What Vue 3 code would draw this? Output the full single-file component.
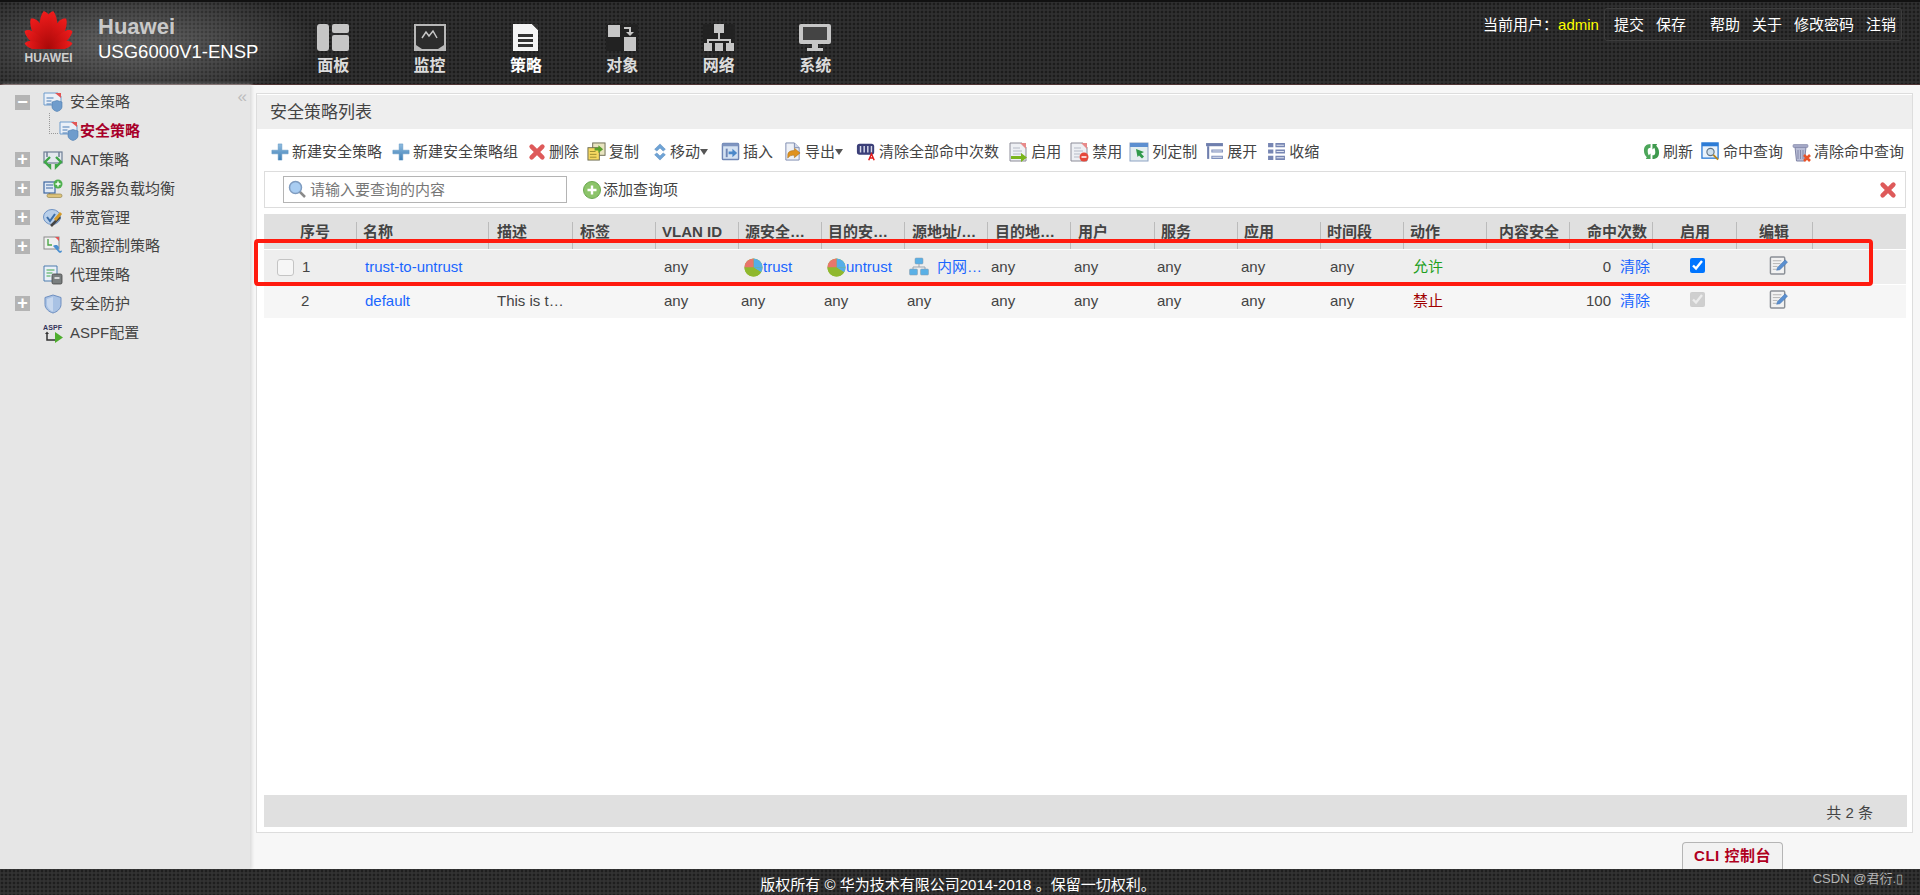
<template>
  <div class="page">
    <!-- shared icons -->
    <svg class="defs" width="0" height="0">
      <defs>
        <linearGradient id="blueG" x1="0" y1="0" x2="0" y2="1"><stop offset="0" stop-color="#8fbce0" /><stop offset="1" stop-color="#3f7fb5" /></linearGradient>
        <linearGradient id="petal" x1="0" y1="0" x2="0" y2="1"><stop offset="0" stop-color="#f01c1c" /><stop offset="1" stop-color="#a80808" /></linearGradient>
        <symbol id="i-plus" viewBox="0 0 20 20"><path d="M8 1h4v7h7v4h-7v7H8v-7H1V8h7z" fill="url(#blueG)" stroke="#5b93c2" stroke-width=".6" /></symbol>
        <symbol id="i-del" viewBox="0 0 20 20"><path d="M4 4l12 12M16 4L4 16" stroke="#de5a5a" stroke-width="5" stroke-linecap="round" fill="none" /></symbol>
        <symbol id="i-copy" viewBox="0 0 20 20"><rect x="6" y="1" width="13" height="13" fill="#e8e4c0" stroke="#6b6b50" /><rect x="1" y="6" width="12" height="13" fill="#f6d860" stroke="#6b6b50" /><path d="M3 10h6M3 13h7M3 16h7" stroke="#9a8a30" /><path d="M8 6h4V3.500L17 7.500l-5 4V9H8z" fill="#5aa02c" /></symbol>
        <symbol id="i-move" viewBox="0 0 20 20"><path d="M10 1l6 6-2.500 2L10 5.500 6.500 9 4 7zM10 19l6-6-2.500-2L10 14.500 6.500 11 4 13z" fill="#6ea3d6" stroke="#4b7fb3" stroke-width=".5" /></symbol>
        <symbol id="i-insert" viewBox="0 0 20 20"><rect x="1.500" y="1.500" width="17" height="17" rx="1" fill="#d5e2f2" stroke="#6f86b5" stroke-width="1.500" /><rect x="1.500" y="1.500" width="17" height="3" fill="#7f95c0" /><path d="M6 7v9" stroke="#6f86b5" stroke-width="2" /><path d="M8 10h4V7l5 4.500-5 4.500v-3H8z" fill="#4b88c9" /></symbol>
        <symbol id="i-export" viewBox="0 0 20 20"><path d="M3 1h9l5 5v13H3z" fill="#eef1f7" stroke="#7d8bb0" /><path d="M12 1v5h5" fill="#cfd7e8" stroke="#7d8bb0" /><path d="M5 14c0-4 3-5 7-5V6.500l6 5-6 5V14c-3 0-5 0-7 3z" fill="#e0921e" stroke="#9c6410" stroke-width=".5" /></symbol>
        <symbol id="i-clear" viewBox="0 0 22 20"><rect x="1" y="1" width="19" height="12" rx="3" fill="#3b3f78" /><path d="M5 3.500v7M9 3.500v7M13 3.500v7M17 3.500v7" stroke="#d6d8e8" stroke-width="1.600" /><path d="M14 19l3-7 3 7M15.500 16.500h3" stroke="#e21818" stroke-width="1.600" fill="none" /></symbol>
        <symbol id="i-on" viewBox="0 0 20 20"><path d="M2 1h12l4 4v14H2z" fill="#eef0f4" stroke="#8c8c98" /><path d="M12 1l6 6V1z" fill="#e88a8a" /><path d="M5 6h7M5 9h9M5 12h9" stroke="#b5bac6" /><path d="M3 14h10v-3l6 4.500-6 4.500v-3H3z" fill="#7ab51d" /></symbol>
        <symbol id="i-off" viewBox="0 0 20 20"><path d="M2 1h12l4 4v14H2z" fill="#eef0f4" stroke="#8c8c98" /><path d="M12 1l6 6V1z" fill="#e88a8a" /><path d="M5 6h7M5 9h9M5 12h6M5 15h5" stroke="#b5bac6" /><circle cx="15" cy="15" r="4.500" fill="#e5483a" /><path d="M12.500 15h5" stroke="#fff" stroke-width="1.500" /></symbol>
        <symbol id="i-cols" viewBox="0 0 20 20"><rect x="1" y="1" width="18" height="18" fill="#e4eef0" stroke="#8ea3c4" /><rect x="1" y="1" width="18" height="4" fill="#5d8fd0" /><path d="M7 7l8 3-3 1.500 3 3-2 2-3-3L8.500 15z" fill="#2f9a4a" /></symbol>
        <symbol id="i-expand" viewBox="0 0 18 18"><path d="M1 1h16v3H1z" fill="#6f7fae" /><path d="M3 4v12" stroke="#6f7fae" stroke-width="2" /><path d="M6 7h11v3H6zM6 13h11v3H6z" fill="#8091bc" /><path d="M7 8.500h9M7 14.500h9" stroke="#dfe4f0" /></symbol>
        <symbol id="i-fold" viewBox="0 0 18 18"><path d="M1 1h5v4H1zM8 1h9v4H8zM1 7h5v4H1zM8 7h9v4H8zM1 13h5v4H1zM8 13h9v4H8z" fill="#7786b3" /><path d="M9 3h7M9 9h7M9 15h7" stroke="#dfe4f0" /></symbol>
        <symbol id="i-refresh" viewBox="0 0 18 18"><path d="M8 1C3 1 1 4 1 8c0 3 1 5 3 7l-1 2h5v-6l-2 2C5 11 5 9 5 8c0-2 1-3 3-3z" fill="#4ca65a" /><path d="M10 17c5 0 7-3 7-7 0-3-1-5-3-7l1-2h-5v6l2-2c1 2 1 4 1 5 0 2-1 3-3 3z" fill="#3f9a4e" /></symbol>
        <symbol id="i-hit" viewBox="0 0 20 20"><rect x="1" y="1" width="17" height="16" fill="#e9f2fb" stroke="#2d7cd6" stroke-width="1.400" /><rect x="1" y="1" width="17" height="3.500" fill="#2d7cd6" /><circle cx="10" cy="10.500" r="3.800" fill="#cfe0ee" stroke="#5f7386" stroke-width="1.200" /><path d="M13 13.500l5 5" stroke="#b8861c" stroke-width="2" /></symbol>
        <symbol id="i-trash" viewBox="0 0 20 20"><path d="M4 5h11l-1.500 14h-8z" fill="#b9bdd6" stroke="#7f84a6" /><rect x="2" y="2.500" width="15" height="3" rx="1" fill="#a4a8c6" stroke="#7f84a6" stroke-width=".6" /><path d="M7 8v9M9.500 8v9M12 8v9" stroke="#858aaa" /><path d="M13 13l6 6M19 13l-6 6" stroke="#ea5328" stroke-width="2.600" /></symbol>
        <symbol id="i-pie" viewBox="0 0 20 20"><circle cx="10" cy="10" r="9.500" fill="#8fb82e" /><path d="M10 10V.5A9.500 9.500 0 0 1 19.500 10z" fill="#54aee8" /><path d="M10 10L19.500 10A9.500 9.500 0 0 1 18 15z" fill="#54aee8" /><path d="M10 10V.5A9.500 9.500 0 0 0 .5 10z" fill="#e8756b" /><path d="M.5 10H10l8 5c-2 3-5 4.500-8 4.500-5 0-9.500-4-9.500-9.500z" fill="#8fb82e" /></symbol>
        <symbol id="i-net" viewBox="0 0 20 20"><rect x="6" y="1" width="8" height="6" rx="1" fill="#5ab0e6" stroke="#8a9aa8" stroke-width=".5" /><path d="M10 7v3M4 13v-3h12v3" stroke="#9aa5b0" fill="none" /><rect x="0.500" y="12" width="8" height="6" rx="1" fill="#5ab0e6" stroke="#8a9aa8" stroke-width=".5" /><rect x="11.500" y="12" width="8" height="6" rx="1" fill="#5ab0e6" stroke="#8a9aa8" stroke-width=".5" /></symbol>
        <symbol id="i-edit" viewBox="0 0 20 20"><rect x="1.500" y="1" width="15" height="18" rx="1" fill="#f2f2f2" stroke="#8a8f96" stroke-width="1.500" /><path d="M4 5h9M4 8h8M4 11h5M4 14h4" stroke="#b2b2b2" /><path d="M8 15l1-3 8-8 2.500 2.500-8 8z" fill="#5a8fd0" stroke="#3f6ea8" stroke-width=".5" /></symbol>
        <symbol id="i-policy" viewBox="0 0 20 20"><path d="M1 1h14l3 3v9H1z" fill="#eaf0f8" stroke="#6f9ccc" /><path d="M12 1l6 5V1z" fill="#e25555" /><path d="M3.500 6h7M3.500 9h5M3.500 12h5" stroke="#4a7db5" /><path d="M9 10l5-1.500 5 1.500v5c0 2-2.500 4-5 4.500-2.500-.5-5-2.500-5-4.500z" fill="#6f9ccc" stroke="#4d7cae" stroke-width=".6" /></symbol>
        <symbol id="i-nat" viewBox="0 0 20 20"><rect x="1" y="2" width="18" height="11" fill="#e4e8ee" stroke="#6f7f96" stroke-width="1.200" /><path d="M4 2v5M16 2v5" stroke="#6f7f96" stroke-width="1.500" /><path d="M7 7l-5 5 5 5v-3M13 7l5 5-5 5v-3" fill="none" stroke="#3fa648" stroke-width="2.400" /></symbol>
        <symbol id="i-server" viewBox="0 0 20 20"><rect x="1" y="3" width="11" height="11" fill="#dfe9f5" stroke="#3c66a0" stroke-width="1.200" /><path d="M3 6h7M3 9h7" stroke="#3c66a0" /><path d="M6.500 14v3" stroke="#777" stroke-width="1.500" /><rect x="4" y="15" width="15" height="3.500" rx="1.700" fill="#dcc27a" stroke="#8a7a40" stroke-width=".6" /><circle cx="15" cy="5" r="4.500" fill="#4fb04f" /><path d="M15 2.500v5M12.500 5h5" stroke="#fff" stroke-width="1.400" /></symbol>
        <symbol id="i-band" viewBox="0 0 20 20"><ellipse cx="9" cy="9" rx="8.500" ry="7.500" fill="#b8cfea" stroke="#6f93c4" /><path d="M4 9l3 4 5-7" fill="none" stroke="#3c6ea8" stroke-width="2" /><path d="M8 18l9-9" stroke="#444" stroke-width="2.600" /><path d="M12 12l6-7" stroke="#d39a2a" stroke-width="3" /></symbol>
        <symbol id="i-quota" viewBox="0 0 20 20"><rect x="1" y="1" width="15" height="12" fill="#f0f0f0" stroke="#8a8a8a" /><path d="M12 1l4 4V1z" fill="#e25555" /><path d="M5 3v6h4" fill="none" stroke="#4ca648" stroke-width="1.400" /><path d="M10 10l6 6.500a2 2 0 0 0 3-2l-2 .5-1.500-1.500L16 11l-2-2c-2 0-4 .5-4 1z" fill="#4a8fd0" /></symbol>
        <symbol id="i-proxy" viewBox="0 0 20 20"><path d="M1 1h13v15H1z" fill="#eaf0f8" stroke="#4d7cae" /><path d="M3.500 5h8M3.500 8h6M3.500 11h4" stroke="#3fa648" /><rect x="9" y="9" width="10" height="10" rx="1.500" fill="#7a7f7f" stroke="#444" stroke-width=".8" /><path d="M11.500 13h5" stroke="#fff" stroke-width="1.400" /></symbol>
        <symbol id="i-shield" viewBox="0 0 20 20"><path d="M10 1l8 2.500v7c0 4-4 7.500-8 8.500-4-1-8-4.500-8-8.500v-7z" fill="#a9c2e4" stroke="#6e8fc0" /><path d="M10 3v14.500c-3-1-6-4-6-7V5z" fill="#c8d8ee" /></symbol>
        <symbol id="i-aspf" viewBox="0 0 20 20"><text x="0" y="6.500" font-size="7" font-weight="bold" font-family="Liberation Sans, sans-serif" fill="#33335a" textLength="19">ASPF</text><path d="M4 10v7h9" fill="none" stroke="#333" stroke-width="1.500" /><path d="M2 11L4 8.500 6 11z" fill="#333" /><path d="M12 9l8 5.500-8 5.500z" fill="#4fae2e" /></symbol>
      </defs>
    </svg>

    <header class="topbar">
      <div class="brand">
        <div class="logo">
          <svg width="49" height="38" viewBox="0 0 49 38">
            <path
              v-for="p in petals"
              :key="p"
              d="M0 0C-7 -8 -10 -22 -8 -32C-7 -36 -4 -38 -3 -38C2 -34 5 -24 4 -16C3.500 -10 2 -4 0 0Z"
              fill="url(#petal)"
              :transform="p"
            />
          </svg>
          <div class="logo-txt">HUAWEI</div>
        </div>
        <div class="brand-txt">
          <div class="vendor">Huawei</div>
          <div class="model">USG6000V1-ENSP</div>
        </div>
      </div>

      <nav class="nav">
        <a class="nav-item">
          <svg width="32" height="27" viewBox="0 0 32 27"><rect x="0" y="0" width="12" height="27" rx="3" fill="#c6c6c6" /><rect x="15" y="0" width="17" height="9" rx="2" fill="#c6c6c6" /><rect x="15" y="11" width="17" height="16" rx="2" fill="#c6c6c6" /></svg>
          <span>面板</span>
        </a>
        <a class="nav-item">
          <svg width="32" height="27" viewBox="0 0 32 27"><path d="M0 0h32v27H0z" fill="#b8b8b8" /><path d="M2 2h28v19l-6 4H8l-6-4z" fill="#2c2c2c" /><path d="M8 14l4-6 3 4 4-5 4 7" fill="none" stroke="#c8c8c8" stroke-width="1.500" /></svg>
          <span>监控</span>
        </a>
        <a class="nav-item active">
          <svg width="27" height="27" viewBox="0 0 27 27"><path d="M1 0h19l6 6v21H1z" fill="#f4f4f4" /><path d="M20 0h6v6z" fill="#333" /><path d="M6 10h15v3H6zM6 15h15v3H6zM6 20h15v3H6z" fill="#333" /></svg>
          <span>策略</span>
        </a>
        <a class="nav-item">
          <svg width="32" height="27" viewBox="0 0 32 27"><rect width="32" height="27" fill="#222" /><rect x="2" y="1" width="12" height="12" fill="#c6c6c6" /><rect x="18" y="13" width="12" height="14" fill="#c6c6c6" /><path d="M18 3h7v5h3l-4 4-4-4h3V5h-5z" fill="#c6c6c6" /></svg>
          <span>对象</span>
        </a>
        <a class="nav-item">
          <svg width="32" height="27" viewBox="0 0 32 27"><rect width="32" height="27" fill="#222" /><rect x="11" y="0" width="10" height="9" fill="#c6c6c6" /><path d="M16 9v7M5 20v-4h22v4" fill="none" stroke="#c6c6c6" stroke-width="2" /><rect x="1" y="19" width="8" height="8" fill="#c6c6c6" /><rect x="12" y="19" width="8" height="8" fill="#c6c6c6" /><rect x="23" y="19" width="8" height="8" fill="#c6c6c6" /></svg>
          <span>网络</span>
        </a>
        <a class="nav-item">
          <svg width="32" height="27" viewBox="0 0 32 27"><rect width="32" height="20" rx="2" fill="#c6c6c6" /><rect x="4" y="3" width="24" height="13" fill="#444" /><rect x="13" y="20" width="6" height="4" fill="#c6c6c6" /><rect x="8" y="24" width="16" height="3" fill="#c6c6c6" /></svg>
          <span>系统</span>
        </a>
      </nav>

      <div class="user-area">
        <span class="user">当前用户：<b>admin</b></span>
        <div class="user-btns">
          <a>提交</a><a>保存</a><i></i><a>帮助</a><a>关于</a><a>修改密码</a><a>注销</a>
        </div>
      </div>
    </header>

    <div class="main">
      <aside class="side">
        <span class="fold">«</span>
        <div v-for="n in tree" :key="n.label + n.icon + n.sub" class="node" :class="{ sub: n.sub, cur: n.cur }">
          <span class="exp" :class="n.exp">
            <template v-if="n.exp === 'open'">−</template>
            <template v-else-if="n.exp === 'closed'">+</template>
          </span>
          <svg class="node-ic"><use :href="'#' + n.icon" /></svg>
          <span class="node-txt">{{ n.label }}</span>
        </div>
      </aside>

      <div class="content">
        <section class="panel">
          <div class="panel-title">安全策略列表</div>

          <div class="toolbar">
            <a v-for="t in tools" :key="t.label" class="tool" :style="{ marginLeft: t.ml + 'px' }">
              <span class="tool-ic" :style="{ width: t.w + 'px' }"><svg :width="t.s || t.w - 3" :height="t.s || t.w - 3"><use :href="'#' + t.icon" /></svg></span>
              {{ t.label }}<em v-if="t.caret" class="caret"></em>
            </a>
            <div class="tool-right">
              <a v-for="t in rightTools" :key="t.label" class="tool">
                <span class="tool-ic" :style="{ width: t.w + 'px' }"><svg :width="t.w - 3" :height="t.w - 3"><use :href="'#' + t.icon" /></svg></span>
                {{ t.label }}
              </a>
            </div>
          </div>

          <div class="search">
            <div class="search-box">
              <svg class="glass" width="18" height="18" viewBox="0 0 18 18"><path d="M11 11l6 6" stroke="#8a8a8a" stroke-width="2.500" /><circle cx="7.500" cy="7.500" r="6" fill="#a9cdf2" stroke="#7f9cc0" stroke-width="1.500" /></svg>
              <input type="text" placeholder="请输入要查询的内容" />
            </div>
            <a class="add-q">
              <svg width="18" height="18" viewBox="0 0 18 18"><circle cx="9" cy="9" r="8.500" fill="#8cc46a" stroke="#6aa84f" /><path d="M9 4.500v9M4.500 9h9" stroke="#fff" stroke-width="2.400" /></svg>
              添加查询项
            </a>
            <svg class="search-x" width="18" height="18"><use href="#i-del" /></svg>
          </div>

          <div class="table">
            <div class="thead">
              <div v-for="h in heads" :key="h.t" class="th" :style="{ paddingLeft: h.p + 'px' }">{{ h.t }}</div>
            </div>

            <div class="tr tr1">
              <div class="td first"><span class="chk"></span>1</div>
              <div class="td p9"><a>trust-to-untrust</a></div>
              <div class="td"></div>
              <div class="td"></div>
              <div class="td p9">any</div>
              <div class="td p6"><svg class="pie"><use href="#i-pie" /></svg><a>trust</a></div>
              <div class="td p6"><svg class="pie"><use href="#i-pie" /></svg><a>untrust</a></div>
              <div class="td p5"><svg class="net"><use href="#i-net" /></svg><a>内网…</a></div>
              <div class="td p4">any</div>
              <div class="td p4">any</div>
              <div class="td p3">any</div>
              <div class="td p4">any</div>
              <div class="td p10">any</div>
              <div class="td p10 green">允许</div>
              <div class="td"></div>
              <div class="td"><span class="count">0</span><a class="clr">清除</a></div>
              <div class="td pchk"><input type="checkbox" checked /></div>
              <div class="td pedit"><svg class="edit"><use href="#i-edit" /></svg></div>
              <div class="td"></div>
            </div>

            <div class="tr tr2">
              <div class="td first second">2</div>
              <div class="td p9"><a>default</a></div>
              <div class="td p9">This is t…</div>
              <div class="td"></div>
              <div class="td p9">any</div>
              <div class="td p3">any</div>
              <div class="td p3">any</div>
              <div class="td p3">any</div>
              <div class="td p4">any</div>
              <div class="td p4">any</div>
              <div class="td p3">any</div>
              <div class="td p4">any</div>
              <div class="td p10">any</div>
              <div class="td p10 red">禁止</div>
              <div class="td"></div>
              <div class="td"><span class="count">100</span><a class="clr">清除</a></div>
              <div class="td pchk"><input type="checkbox" checked disabled /></div>
              <div class="td pedit"><svg class="edit"><use href="#i-edit" /></svg></div>
              <div class="td"></div>
            </div>

            <div class="mark"></div>
          </div>

          <div class="pager">共 2 条</div>
        </section>

        <div class="cli-row"><a class="cli">CLI 控制台</a></div>
      </div>
    </div>

    <footer class="foot">
      <span class="copy">版权所有 © 华为技术有限公司2014-2018 。保留一切权利。</span>
      <span class="wm">CSDN @君衍.▯</span>
    </footer>
  </div>
</template>

<script setup>
const petals = [12, -12, 35, -35, 58, -58, 82, -82].map((a, i) => {
  const s = [1, 1, 0.92, 0.92, 0.78, 0.78, 0.64, 0.64][i]
  const flip = a < 0 ? -1 : 1
  return `translate(24.5 38) rotate(${a}) scale(${s * flip} ${s})`
})

const tree = [
  { label: '安全策略', icon: 'i-policy', exp: 'open' },
  { label: '安全策略', icon: 'i-policy', sub: true, cur: true },
  { label: 'NAT策略', icon: 'i-nat', exp: 'closed' },
  { label: '服务器负载均衡', icon: 'i-server', exp: 'closed' },
  { label: '带宽管理', icon: 'i-band', exp: 'closed' },
  { label: '配额控制策略', icon: 'i-quota', exp: 'closed' },
  { label: '代理策略', icon: 'i-proxy' },
  { label: '安全防护', icon: 'i-shield', exp: 'closed' },
  { label: 'ASPF配置', icon: 'i-aspf' },
]

const tools = [
  { label: '新建安全策略', icon: 'i-plus', ml: 14, w: 21 },
  { label: '新建安全策略组', icon: 'i-plus', ml: 10, w: 21 },
  { label: '删除', icon: 'i-del', ml: 10, w: 21 },
  { label: '复制', icon: 'i-copy', ml: 8, w: 22 },
  { label: '移动', icon: 'i-move', ml: 12, w: 19, s: 18, caret: true },
  { label: '插入', icon: 'i-insert', ml: 13, w: 22 },
  { label: '导出', icon: 'i-export', ml: 10, w: 22, caret: true },
  { label: '清除全部命中次数', icon: 'i-clear', ml: 13, w: 23 },
  { label: '启用', icon: 'i-on', ml: 9, w: 23 },
  { label: '禁用', icon: 'i-off', ml: 8, w: 23 },
  { label: '列定制', icon: 'i-cols', ml: 7, w: 23 },
  { label: '展开', icon: 'i-expand', ml: 8, w: 22 },
  { label: '收缩', icon: 'i-fold', ml: 10, w: 22 },
]

const rightTools = [
  { label: '刷新', icon: 'i-refresh', w: 20 },
  { label: '命中查询', icon: 'i-hit', w: 22 },
  { label: '清除命中查询', icon: 'i-trash', w: 23 },
]

const heads = [
  { t: '序号', p: 36 }, { t: '名称', p: 6 }, { t: '描述', p: 8 }, { t: '标签', p: 7 },
  { t: 'VLAN ID', p: 6 }, { t: '源安全…', p: 6 }, { t: '目的安…', p: 6 }, { t: '源地址/…', p: 7 },
  { t: '目的地…', p: 7 }, { t: '用户', p: 7 }, { t: '服务', p: 6 }, { t: '应用', p: 6 },
  { t: '时间段', p: 6 }, { t: '动作', p: 6 }, { t: '内容安全', p: 12 }, { t: '命中次数', p: 17 },
  { t: '启用', p: 27 }, { t: '编辑', p: 22 }, { t: '', p: 0 },
]
</script>

<style>
html, body { margin: 0; overflow: hidden; }
</style>

<style scoped>
.page {
  width: 1920px;
  height: 895px;
  display: flex;
  flex-direction: column;
  background: #f7f7f7;
  color: #444;
  font: 15px/20px "Liberation Sans", "Noto Sans CJK SC", sans-serif;
}
.defs { position: absolute; }

.topbar {
  height: 85px;
  flex: none;
  display: flex;
  box-sizing: border-box;
  border-top: 2px solid #111;
  border-bottom: 1px solid #4e3434;
  background:
    radial-gradient(ellipse 190px 60px at 130px 42px, rgba(255, 255, 255, .26), transparent),
    radial-gradient(circle, #1c1c1c 1.2px, transparent 1.7px) 0 0 / 4px 4px,
    #303031;
}
.brand { width: 285px; flex: none; display: flex; padding: 9px 0 0 24px; box-sizing: border-box; }
.logo { width: 49px; }
.logo svg { display: block; }
.logo-txt { font-size: 12px; line-height: 13px; margin-top: 3px; font-weight: bold; color: #cfcfcf; text-align: center; }
.brand-txt { margin-left: 25px; }
.vendor { font-size: 22px; line-height: 24px; margin-top: 4px; font-weight: bold; color: #c9c9c9; }
.model { font-size: 18.500px; line-height: 23px; margin-top: 1px; color: #fff; }

.nav { display: flex; padding-top: 22px; }
.nav-item {
  width: 96.400px;
  height: 62px;
  display: flex;
  flex-direction: column;
  align-items: center;
  color: #dcdcdc;
  font-size: 16px;
  font-weight: bold;
}
.nav-item span { line-height: 20px; margin-top: 5px; }
.nav-item.active span { color: #fff; }

.user-area { margin-left: auto; display: flex; padding: 6px 18px 0 0; color: #fff; height: 33px; }
.user { line-height: 33px; margin-right: 5px; }
.user b { color: #ff0; font-weight: normal; }
.user-btns {
  display: flex;
  gap: 12px;
  padding: 0 5px 0 9px;
  line-height: 31px;
  border: 1px solid #3c3c3c;
  border-radius: 3px;
}
.user-btns i { width: 0; }

.main { flex: 1; display: flex; min-height: 0; }

.side {
  position: relative;
  width: 250px;
  flex: none;
  box-sizing: border-box;
  padding-top: 3px;
  background: #e6e6e6;
  box-shadow: 2px 0 3px #dcdcdc;
}
.fold { position: absolute; top: 5px; right: 3px; font-size: 17px; line-height: 14px; color: #bcbcbc; }
.node { position: relative; height: 28.800px; display: flex; align-items: center; padding-left: 15px; color: #444; }
.exp {
  width: 15px;
  height: 15px;
  flex: none;
  margin-right: 13px;
  text-align: center;
  line-height: 14px;
  font-size: 18px;
  font-weight: bold;
  color: #fff;
}
.exp.open, .exp.closed { background: #b4b4b4; }
.node-ic { width: 20px; height: 20px; flex: none; margin-right: 7px; }
.node.sub { padding-left: 59px; }
.node.sub .exp { display: none; }
.node.sub .node-ic { margin-right: 1px; }
.node.sub::before {
  content: "";
  position: absolute;
  left: 49px;
  top: -4px;
  width: 8px;
  height: 20px;
  border-left: 1px dotted #999;
  border-bottom: 1px dotted #999;
}
.node.cur .node-txt { color: #a8002a; font-weight: bold; }

.content { flex: 1; display: flex; flex-direction: column; margin: 8px 7px 0 6px; min-width: 0; }
.panel {
  flex: 1;
  display: flex;
  flex-direction: column;
  box-sizing: border-box;
  padding-top: 1px;
  background: #fff;
  border: 1px solid #ddd;
}
.panel-title {
  height: 34px;
  padding-left: 13px;
  line-height: 36px;
  font-size: 17px;
  background: #eee;
  color: #444;
}
.toolbar { height: 42px; box-sizing: border-box; padding-top: 3px; display: flex; align-items: center; }
.tool { display: flex; align-items: center; white-space: nowrap; }
.tool-ic { display: flex; align-items: center; flex: none; height: 18px; }
.tool-ic svg { display: block; flex: none; }
.caret {
  width: 0;
  height: 0;
  margin: 1px 0 0 0;
  border: 4px solid transparent;
  border-top: 6px solid #555;
  border-bottom: 0;
}
.tool-right { margin-left: auto; display: flex; gap: 8px; padding-right: 8px; }

.search {
  height: 37px;
  margin: 0 6px 0 7px;
  display: flex;
  align-items: center;
  box-sizing: border-box;
  border: 1px solid #ddd;
  padding-left: 18px;
}
.search-box { position: relative; width: 284px; height: 27px; }
.search-box input {
  width: 100%;
  height: 100%;
  box-sizing: border-box;
  border: 1px solid #b4b4b4;
  padding: 0 0 0 26px;
  font: inherit;
  outline: none;
  background: #fff;
}
.search-box input::placeholder { color: #777; }
.glass { position: absolute; left: 5px; top: 4px; }
.add-q { display: flex; align-items: center; gap: 2px; margin-left: 16px; color: #444; }
.search-x { margin-left: auto; margin-right: 8px; }

.table { position: relative; margin: 6px 6px 0 7px; flex: 1; }
.thead, .tr {
  display: grid;
  grid-template-columns: 92px 132px 84px 83px 83px 83px 83px 83px 83px 84px 83px 83px 83px 83px 83px 83px 84px 76px 1fr;
}
.thead { height: 35px; background: #e0e0e0; }
.th {
  margin-top: 8px;
  box-sizing: border-box;
  border-left: 1px solid #bbb;
  font-weight: bold;
  color: #444;
  white-space: nowrap;
  overflow: hidden;
}
.th:first-child { border-left: 0; }
.tr { height: 33px; margin-top: 1px; background: #f6f6f6; }
.tr1 { height: 34px; background: #eee; }
.tr2 { box-sizing: border-box; padding-bottom: 2px; }
.td { display: flex; align-items: center; min-width: 0; white-space: nowrap; }
.td a { color: #1a66ff; }
.first { padding-left: 13px; }
.second { padding-left: 37px; }
.chk {
  width: 15px;
  height: 15px;
  margin-right: 8px;
  background: #f6f6f6;
  border: 1px solid #c4c4c4;
  border-radius: 3px;
}
.p3 { padding-left: 3px; }
.p4 { padding-left: 4px; }
.p5 { padding-left: 5px; }
.p6 { padding-left: 6px; }
.p9 { padding-left: 9px; }
.p10 { padding-left: 10px; }
.pie { width: 19px; height: 19px; flex: none; }
.net { width: 20px; height: 20px; flex: none; margin-right: 8px; }
.green { color: #1ea01e; }
.red { color: #a00000; }
.count { width: 42px; text-align: right; }
.clr { margin-left: 9px; }
.pchk { padding-left: 38px; }
.pchk input { width: 15px; height: 15px; margin: 0 0 3px; }
.pedit { padding-left: 33px; }
.edit { width: 19px; height: 19px; margin-bottom: 3px; }

.mark {
  position: absolute;
  left: -10px;
  top: 25px;
  width: 1619px;
  height: 47px;
  box-sizing: border-box;
  border: 4px solid #ff1a0e;
  border-radius: 4px;
  pointer-events: none;
}

.pager {
  height: 32px;
  margin: 0 5px 5px 7px;
  padding-right: 34px;
  box-sizing: border-box;
  background: #e0e0e0;
  text-align: right;
  line-height: 36px;
}

.cli-row { height: 36px; flex: none; display: flex; justify-content: flex-end; align-items: flex-end; padding-right: 130px; }
.cli {
  width: 101px;
  height: 27px;
  box-sizing: border-box;
  text-align: center;
  line-height: 25px;
  font-weight: bold;
  letter-spacing: .5px;
  color: #b0001e;
  background: #f2f2f2;
  border: 1px solid #b5b5b5;
  border-bottom: 0;
  border-radius: 4px 4px 0 0;
}

.foot {
  position: relative;
  height: 26px;
  flex: none;
  text-align: center;
  color: #fff;
  background:
    radial-gradient(circle, #1e1e1e 1.200px, transparent 1.700px) 0 0 / 4px 4px,
    #333;
}
.copy { display: block; line-height: 32px; height: 26px; overflow: hidden; padding-right: 4px; }
.wm { position: absolute; right: 17px; top: 0; font-size: 13px; color: #b4b4b4; line-height: 19px; }
</style>
